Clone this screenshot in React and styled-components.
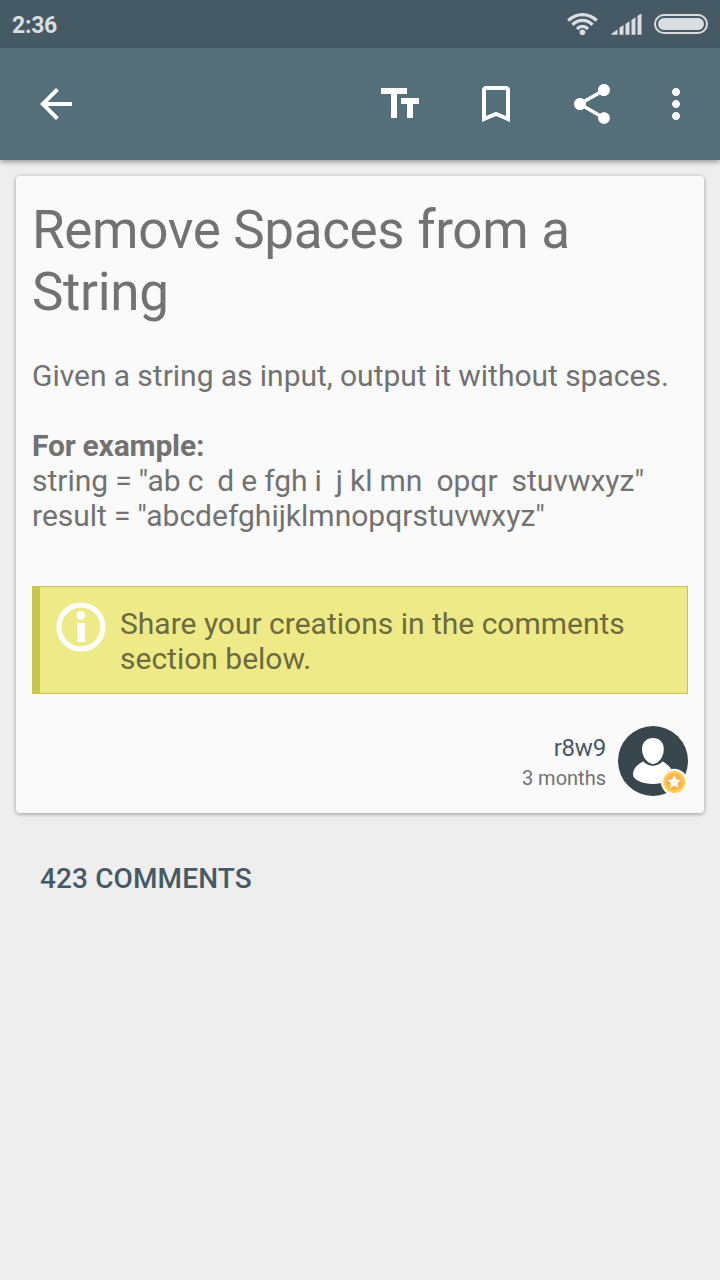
import React from "react";
import styled, { createGlobalStyle } from "styled-components";

const GlobalStyle = createGlobalStyle`
  *, *::before, *::after { box-sizing: border-box; }
  body {
    margin: 0;
    background: #eeeeee;
    font-family: Roboto, "Liberation Sans", sans-serif;
    color: #727272;
  }
`;

const Screen = styled.div`
  display: flex;
  flex-direction: column;
  width: 720px;
  height: 1280px;
  background: #eeeeee;
  overflow: hidden;
`;

const StatusBar = styled.header`
  display: flex;
  align-items: center;
  height: 48px;
  flex: none;
  padding: 0 12px;
  background: #455a64;
  color: #dadee0;
`;

const Clock = styled.span`
  flex: 1;
  padding-top: 3px;
  font-size: 23px;
  line-height: 28px;
  font-weight: 700;
  letter-spacing: -0.25px;
`;

const StatusIcon = styled.svg`
  display: block;
  margin-right: ${(p) => p.$gap || 0}px;
  fill: currentColor;
`;

const Toolbar = styled.nav`
  display: flex;
  align-items: center;
  height: 112px;
  flex: none;
  padding: 0 20px 0 32px;
  background: #546e7a;
  box-shadow: 0 2px 5px rgba(0, 0, 0, 0.36);
`;

const IconButton = styled.button`
  display: block;
  width: 48px;
  height: 48px;
  padding: 0;
  border: 0;
  background: none;
  color: #fff;
  margin-left: ${(p) => p.$gap || 0}px;
  margin-right: ${(p) => (p.$leading ? "auto" : 0)};

  svg {
    display: block;
    width: 48px;
    height: 48px;
    fill: currentColor;
  }
`;

const Card = styled.article`
  height: 637px;
  flex: none;
  margin: 16px 16px 0;
  padding: 23px 16px 0;
  background: #fafafa;
  border-radius: 4px;
  box-shadow: 0 1px 4px rgba(0, 0, 0, 0.36);
`;

const Title = styled.h1`
  margin: 0;
  font-size: 53px;
  line-height: 62px;
  font-weight: 400;
  letter-spacing: -0.35px;
`;

const Paragraph = styled.p`
  margin: 35px 0 0;
  font-size: 30px;
  line-height: 35px;
  white-space: pre-wrap;
  word-spacing: ${(p) => p.$wordSpacing}px;
`;

const Label = styled.strong`
  font-weight: 700;
  letter-spacing: -0.15px;
`;

const Note = styled.aside`
  display: flex;
  height: 108px;
  margin-top: 53px;
  padding: 15px 15px 0 16px;
  border: 1px solid #cac64d;
  border-left-width: 8px;
  background: #eeea88;
  color: #6d6b3f;
`;

const NoteIcon = styled.svg`
  flex: none;
  width: 50px;
  height: 50px;
  margin-right: 14px;
`;

const NoteText = styled.p`
  margin: 4px 0 0;
  font-size: 30px;
  line-height: 35px;
`;

const Author = styled.footer`
  display: flex;
  justify-content: flex-end;
  gap: 12px;
  margin-top: 32px;
`;

const AuthorInfo = styled.div`
  padding-top: 8px;
  text-align: right;
`;

const AuthorName = styled.div`
  color: #455a64;
  font-size: 24px;
  line-height: 29px;
  letter-spacing: -0.2px;
`;

const PostedAt = styled.div`
  margin-top: 3px;
  font-size: 20px;
  line-height: 24px;
`;

const Avatar = styled.svg`
  display: block;
  width: 70px;
  height: 70px;
`;

const CommentsHeading = styled.h2`
  margin: 49px 40px 0;
  color: #455a64;
  font-size: 28px;
  line-height: 33px;
  font-weight: 500;
  letter-spacing: 0.12px;
`;

const ICONS = {
  back: "M20 11H7.83l5.59-5.59L12 4l-8 8 8 8 1.41-1.41L7.83 13H20v-2z",
  textSize: "M2.5 4v3h5v12h3V7h5V4h-13zm19 5h-9v3h3v7h3v-7h3V9z",
  bookmark:
    "M17 3H7c-1.1 0-2 .9-2 2v16l7-3 7 3V5c0-1.1-.9-2-2-2zm0 15l-5-2.18L7 18V5h10v13z",
  share:
    "M18 16.08c-.76 0-1.44.3-1.96.77L8.91 12.7c.05-.23.09-.46.09-.7s-.04-.47-.09-.7l7.05-4.11c.54.5 1.25.81 2.04.81 1.66 0 3-1.34 3-3s-1.34-3-3-3-3 1.34-3 3c0 .24.04.47.09.7L8.04 9.81C7.5 9.31 6.79 9 6 9c-1.66 0-3 1.34-3 3s1.34 3 3 3c.79 0 1.5-.31 2.04-.81l7.12 4.16c-.05.21-.08.43-.08.65 0 1.61 1.31 2.92 2.92 2.92 1.61 0 2.92-1.31 2.92-2.92s-1.31-2.92-2.92-2.92z",
  more: "M12 8c1.1 0 2-.9 2-2s-.9-2-2-2-2 .9-2 2 .9 2 2 2zm0 2c-1.1 0-2 .9-2 2s.9 2 2 2 2-.9 2-2-.9-2-2-2zm0 6c-1.1 0-2 .9-2 2s.9 2 2 2 2-.9 2-2-.9-2-2-2z",
};

function Action({ icon, label, gap, leading }) {
  return (
    <IconButton aria-label={label} $gap={gap} $leading={leading}>
      <svg viewBox="0 0 24 24">
        <path d={ICONS[icon]} />
      </svg>
    </IconButton>
  );
}

function Wifi() {
  return (
    <StatusIcon $gap={12} width="32" height="24" viewBox="0.5 0 32 24">
      <g fill="none" stroke="currentColor" strokeWidth="3.3">
        <path d="M1.8 8.7C9.5.6 22.5.6 30.2 8.7" />
        <path d="M6 12.9c5.600-6 14.400-6 20 0" />
        <path d="M10.5 17c3.300-3.400 7.700-3.400 11 0" />
      </g>
      <circle cx="16" cy="20.2" r="2.8" />
    </StatusIcon>
  );
}

function Signal() {
  return (
    <StatusIcon $gap={11} width="32" height="24" viewBox="0.5 0 32 24">
      <path d="M1 22.700v-1l6-4.200v5.200zM9 22.700v-7l4-2.700v9.700zM15 22.700V12l4-2.800v13.500zM21 22.700V8l4-2.800v17.500zM27 22.700V4l3-2h1v20.700z" />
    </StatusIcon>
  );
}

function Battery() {
  return (
    <StatusIcon width="54" height="20" viewBox="0 0 54 20">
      <rect x="1" y="1" width="52" height="18" rx="9" fill="none" stroke="currentColor" strokeWidth="2" />
      <rect x="4" y="4" width="46" height="12" rx="6" />
    </StatusIcon>
  );
}

function AuthorAvatar() {
  return (
    <Avatar viewBox="0 0 70 70">
      <circle cx="35" cy="35" r="35" fill="#39464c" />
      <path
        d="M25.5 35.2C30 40.8 39.8 40.8 44.3 35.2C49 38 55 42.5 55 48.5C55 54 45 58 35 58S15 54 15 48.5C15 42 20.5 38 25.5 35.2Z"
        fill="#fff"
      />
      <path
        d="M35 12C41.5 12 45.8 16.5 45.8 23C45.8 31 40.5 38 35 38S24 31 24 23C24 16.500 28.500 12 35 12Z"
        fill="#fff"
      />
      <path d="M25.4 34.2C30 40.3 39.900 40.300 44.500 34.200" fill="none" stroke="#39464c" strokeWidth="1.3" />
      <circle cx="56.2" cy="56" r="13.300" fill="#fafafa" />
      <circle cx="56.2" cy="56" r="11" fill="#fecd52" />
      <circle cx="56.2" cy="56" r="8.500" fill="#ffb34d" />
      <path
        d="M56.200 49.300l2 4.200 4.600.6-3.400 3.200.9 4.600-4.100-2.300-4.100 2.300.9-4.600-3.400-3.200 4.600-.6z"
        fill="#fff"
      />
    </Avatar>
  );
}

export default function App() {
  return (
    <>
      <GlobalStyle />
      <Screen>
        <StatusBar>
          <Clock>2:36</Clock>
          <Wifi />
          <Signal />
          <Battery />
        </StatusBar>
        <Toolbar>
          <Action icon="back" label="Back" leading />
          <Action icon="textSize" label="Text size" />
          <Action icon="bookmark" label="Bookmark" gap={48} />
          <Action icon="share" label="Share" gap={48} />
          <Action icon="more" label="More options" gap={36} />
        </Toolbar>
        <Card>
          <Title>Remove Spaces from a String</Title>
          <Paragraph $wordSpacing={-0.2}>Given a string as input, output it without spaces.</Paragraph>
          <Paragraph $wordSpacing={-0.45}>
            <Label>For example:</Label>
            {'\nstring = "ab c  d e fgh i  j kl mn  opqr  stuvwxyz"\nresult = "abcdefghijklmnopqrstuvwxyz"'}
          </Paragraph>
          <Note>
            <NoteIcon viewBox="0 0 50 50" fill="#fff">
              <circle cx="25" cy="25" r="22" fill="none" stroke="#fff" strokeWidth="5.2" />
              <circle cx="24.800" cy="13.300" r="4.400" />
              <rect x="21" y="21" width="8" height="19" rx="0.5" />
            </NoteIcon>
            <NoteText>Share your creations in the comments section below.</NoteText>
          </Note>
          <Author>
            <AuthorInfo>
              <AuthorName>r8w9</AuthorName>
              <PostedAt>3 months</PostedAt>
            </AuthorInfo>
            <AuthorAvatar />
          </Author>
        </Card>
        <CommentsHeading>423 COMMENTS</CommentsHeading>
      </Screen>
    </>
  );
}
